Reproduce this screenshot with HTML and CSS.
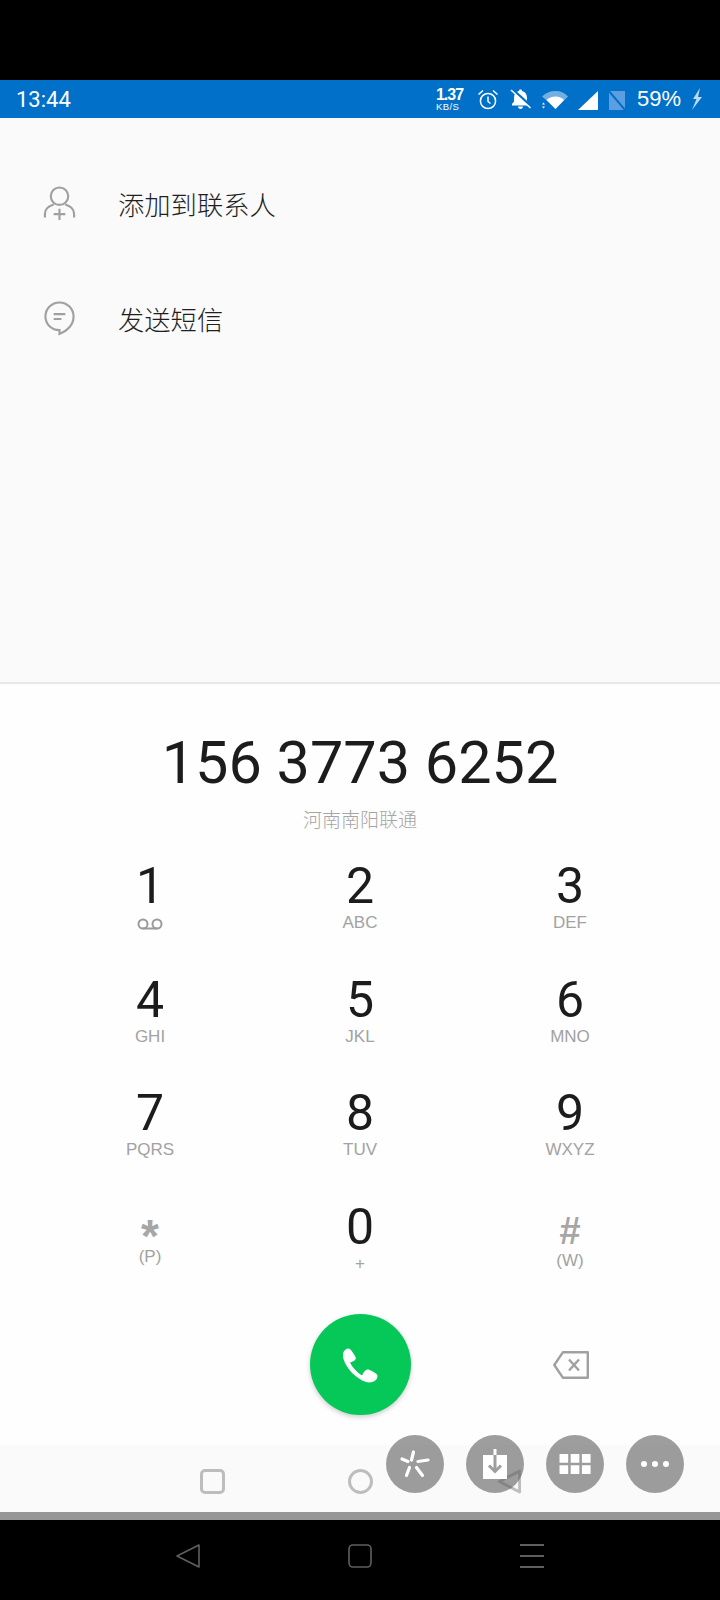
FILE: index.html
```html
<!DOCTYPE html>
<html lang="zh-CN">

<head>
    <meta charset="UTF-8">
    <meta name="viewport" content="width=device-width, initial-scale=1.0">
    <title>拨号</title>
    <link rel="stylesheet" href="styles.css">
</head>

<body>
    <div class="screen">
        <div class="top-black"></div>

        <!-- Status bar -->
        <header class="status-bar">
            <span class="clock">13:44</span>
            <div class="status-icons">
                <div class="net-speed">
                    <span class="net-value">1.37</span>
                    <span class="net-unit">KB/S</span>
                </div>
                <svg class="ic-alarm" viewBox="0 0 22 21" fill="none" stroke="#fff" stroke-width="1.5">
                    <circle cx="11" cy="12" r="7.6" />
                    <path d="M11 7.5V12.5L13.5 14.5" />
                    <path d="M1.5 5.5L6 1.5M20.5 5.5L16 1.5" />
                </svg>
                <svg class="ic-bell" viewBox="0 0 23 20">
                    <path d="M11.5 0.5c1 0 1.6.6 1.6 1.5C16.5 3 18 5.5 18 9V12.5L20 15V16.5H3V15L5 12.5V9C5 5.5 6.5 3 9.9 2 9.9 1.1 10.5 .5 11.5 .5z" fill="#fff" />
                    <path d="M9 17.5H14C14 18.9 12.9 20 11.5 20S9 18.9 9 17.5z" fill="#fff" />
                    <path d="M3 0L23 18" stroke="#0070c9" stroke-width="2.5" />
                    <path d="M2 1L21.5 19" stroke="#fff" stroke-width="1.5" />
                </svg>
                <svg class="ic-wifi" viewBox="0 0 26 21" fill="#fff">
                    <path d="M0 7.5C3.5 4 8 2 13.5 2S23 4 26 7.5L13.5 20 6.5 13z" opacity=".45" />
                    <path d="M4.5 11C7 8.8 10 7.5 13.5 7.5s6.5 1.3 8.5 3.5L13.5 20z" />
                    <path d="M0 15.5l1.5-2 1.5 2zM0 17.5h3l-1.5 2z" />
                </svg>
                <svg class="ic-signal" viewBox="0 0 20 21" fill="#fff">
                    <path d="M20 2V21H0z" />
                </svg>
                <svg class="ic-sim" viewBox="0 0 19 21">
                    <path d="M1 2H17V21H1z" fill="#5b9fe0" />
                    <path d="M0 1L17 21" stroke="#0070c9" stroke-width="2" />
                </svg>
                <span class="battery">59%</span>
                <svg class="ic-bolt" viewBox="0 0 11 22" fill="#fff">
                    <path d="M9 0L2 11H5.5L1 22 11 9H7z" opacity=".75" />
                </svg>
            </div>
        </header>

        <!-- Call actions -->
        <section class="action-list">
            <div class="action-row">
                <svg class="action-icon" viewBox="0 0 34 36" fill="none" stroke="#a0a0a0" stroke-width="2.2">
                    <circle cx="17" cy="11" r="9" />
                    <path d="M2 33V29C2 24.5 6 21 11 19.5M32 33V29C32 24.5 28 21 23 19.5" />
                    <path d="M17 24V35.5M11 29.5H23" />
                </svg>
                <span>添加到联系人</span>
            </div>
            <div class="action-row">
                <svg class="action-icon" viewBox="0 0 34 36" fill="none" stroke="#a0a0a0" stroke-width="2.2">
                    <path d="M17 2C9 2 2.5 8.5 2.5 16.5S9 30.5 17 30.5V34.5C25 31.5 31.5 25 31.5 16.5 31.5 8.5 25 2 17 2z" />
                    <path d="M11 14H23M11 19H19" />
                </svg>
                <span>发送短信</span>
            </div>
        </section>

        <!-- Dial pad -->
        <section class="dialer">
            <div class="dial-number">156 3773 6252</div>
            <div class="dial-carrier">河南南阳联通</div>

            <div class="keypad">
                <div class="key">
                    <span class="key-digit">1</span>
                    <svg class="ic-voicemail" viewBox="0 0 26 13" fill="none" stroke="#9a9a9a" stroke-width="2">
                        <circle cx="6" cy="6" r="4.5" />
                        <circle cx="20" cy="6" r="4.5" />
                        <path d="M6 10.5H20" />
                    </svg>
                </div>
                <div class="key"><span class="key-digit">2</span><span class="key-sub">ABC</span></div>
                <div class="key"><span class="key-digit">3</span><span class="key-sub">DEF</span></div>
                <div class="key"><span class="key-digit">4</span><span class="key-sub">GHI</span></div>
                <div class="key"><span class="key-digit">5</span><span class="key-sub">JKL</span></div>
                <div class="key"><span class="key-digit">6</span><span class="key-sub">MNO</span></div>
                <div class="key"><span class="key-digit">7</span><span class="key-sub">PQRS</span></div>
                <div class="key"><span class="key-digit">8</span><span class="key-sub">TUV</span></div>
                <div class="key"><span class="key-digit">9</span><span class="key-sub">WXYZ</span></div>
                <div class="key"><span class="key-star">*</span><span class="key-sub">(P)</span></div>
                <div class="key"><span class="key-digit">0</span><span class="key-sub">+</span></div>
                <div class="key"><span class="key-hash">#</span><span class="key-sub">(W)</span></div>
            </div>

            <div class="call-row">
                <div></div>
                <div class="call-button">
                    <svg viewBox="0 0 36 36" fill="#fff">
                        <path d="M1.5 5C3 2 6 .5 8 2 9.5 3.5 12 7 13.5 10 14.5 12 13 14 8 15.5 10.5 20.5 14.5 25 20 28.5 22 23.5 24.5 22 26.5 22.5 29.5 23.5 33 25.5 35 27.5 36 29 35.5 31 34 33 31 35.5 27 36 24 35 14 31.5 4.5 22 1.5 12 .8 9.5 .8 7 1.5 5Z" />
                    </svg>
                </div>
                <div class="backspace">
                    <svg viewBox="0 0 36 28" fill="none" stroke="#a0a0a0" stroke-width="2.4" stroke-linejoin="round">
                        <path d="M10 1.2H34.8V26.8H10L1.3 14z" />
                        <path d="M16 8.5L26 19.5M26 8.5L16 19.5" />
                    </svg>
                </div>
            </div>
        </section>

        <!-- In-app navigation strip -->
        <nav class="soft-nav">
            <span class="soft-square"></span>
            <span class="soft-circle"></span>
            <svg class="soft-back" viewBox="0 0 25 26" fill="none" stroke="#bdbdbd" stroke-width="3" stroke-linejoin="round">
                <path d="M23 2V24L2 13z" />
            </svg>
        </nav>
        <div class="grey-bar"></div>

        <!-- Device navigation -->
        <nav class="device-nav">
            <svg class="device-icon" viewBox="0 0 24 24" fill="none" stroke="#5f5f5f" stroke-width="1.6" stroke-linejoin="round">
                <path d="M23 1V23L1 12z" />
            </svg>
            <svg class="device-icon" viewBox="0 0 24 24" fill="none" stroke="#5f5f5f" stroke-width="1.6">
                <rect x="1" y="1" width="22" height="22" rx="4" />
            </svg>
            <svg class="device-icon" viewBox="0 0 24 24" fill="none" stroke="#5f5f5f" stroke-width="2">
                <path d="M0 1H24M0 12H24M0 23H24" />
            </svg>
        </nav>

        <!-- Floating shortcut buttons -->
        <div class="float-buttons">
            <div class="float-button">
                <svg viewBox="0 0 36 36" fill="none" stroke="#fff" stroke-width="3.2" stroke-linecap="round">
                    <path d="M14.5 14L16.5 6M5 13L11 15.5M21 15.5L31 14M12.5 21.5L9.5 29.5M19.5 21.5L25.5 29.5" />
                </svg>
            </div>
            <div class="float-button">
                <svg viewBox="0 0 36 36">
                    <path d="M6 9H30V33H6z" fill="#fff" />
                    <path d="M16.5 3H19.5V9H16.5z" fill="#fff" />
                    <path d="M18 9V25.5M12 19.5L18 25.5 24 19.5" fill="none" stroke="#9e9e9e" stroke-width="3" />
                </svg>
            </div>
            <div class="float-button">
                <svg viewBox="0 0 36 36" fill="#fff">
                    <path d="M2.5 8H11.2V16.7H2.5zM13.7 8H22.4V16.7H13.7zM24.9 8H33.6V16.7H24.9zM2.5 19.2H11.2V28H2.5zM13.7 19.2H22.4V28H13.7zM24.9 19.2H33.6V28H24.9z" />
                </svg>
            </div>
            <div class="float-button">
                <svg viewBox="0 0 36 36" fill="#fff">
                    <circle cx="7" cy="18" r="3" />
                    <circle cx="18" cy="18" r="3" />
                    <circle cx="29" cy="18" r="3" />
                </svg>
            </div>
        </div>
    </div>
</body>

</html>
```

FILE: styles.css
```css
body {
    margin: 0;
    padding: 0;
    background-color: #000;
    font-family: "Liberation Sans", Arial, sans-serif;
}

.screen {
    position: relative;
    width: 720px;
    height: 1600px;
    display: flex;
    flex-direction: column;
    overflow: hidden;
}

.top-black {
    height: 80px;
    background-color: #000;
}

/* Status bar */
.status-bar {
    height: 38px;
    background-color: #0070c9;
    color: #fff;
    display: flex;
    align-items: center;
    justify-content: space-between;
    padding: 0 18px 0 16px;
}

.clock {
    font-family: Roboto, sans-serif;
    font-size: 22px;
}

.status-icons {
    display: flex;
    align-items: center;
    gap: 10px;
}

.net-speed {
    width: 31px;
    display: flex;
    flex-direction: column;
    align-items: flex-start;
}

.net-value {
    font-weight: bold;
    font-size: 16px;
    line-height: 14px;
    letter-spacing: -1px;
}

.net-unit {
    font-size: 9.5px;
    line-height: 9px;
    letter-spacing: 0.4px;
}

.ic-alarm {
    width: 22px;
    height: 21px;
}

.ic-bell {
    width: 23px;
    height: 20px;
}

.ic-wifi {
    width: 26px;
    height: 21px;
}

.ic-signal {
    width: 20px;
    height: 21px;
}

.ic-sim {
    width: 19px;
    height: 21px;
}

.battery {
    font-size: 22px;
}

.ic-bolt {
    width: 11px;
    height: 22px;
}

/* Actions */
.action-list {
    height: 566px;
    box-sizing: border-box;
    background-color: #fafafa;
    border-bottom: 2px solid #e8e8e8;
    padding-top: 56px;
    display: flex;
    flex-direction: column;
    gap: 57px;
}

.action-row {
    height: 58px;
    display: flex;
    align-items: center;
    gap: 42px;
    padding-left: 43px;
    font-family: "Noto Sans CJK SC", sans-serif;
    font-size: 26.3px;
    font-weight: 300;
    color: #1f1f1f;
}

.action-icon {
    width: 33px;
    height: 36px;
}

/* Dialer */
.dialer {
    height: 761px;
    box-sizing: border-box;
    background-color: #fefefe;
    padding-top: 44px;
}

.dial-number {
    font-family: Roboto, sans-serif;
    font-size: 59.4px;
    line-height: 70px;
    color: #1c1c1c;
    text-align: center;
}

.dial-carrier {
    margin-top: 8px;
    font-family: "Noto Sans CJK SC", sans-serif;
    font-size: 19px;
    font-weight: 300;
    line-height: 26px;
    color: #a5a5a5;
    text-align: center;
}

.keypad {
    margin: 29px 45px 0;
    display: grid;
    grid-template-columns: repeat(3, 210px);
    grid-auto-rows: 113.5px;
}

.key {
    display: flex;
    flex-direction: column;
    align-items: center;
}

.key-digit {
    font-family: Roboto, sans-serif;
    font-size: 50px;
    line-height: 50px;
    color: #1c1c1c;
}

.key-sub {
    margin-top: 2px;
    font-size: 17px;
    line-height: 20px;
    color: #a2a2a2;
}

.key-star,
.key-hash {
    box-sizing: border-box;
    font-weight: bold;
    line-height: 50px;
    color: #a6a6a6;
}

.key-star {
    height: 43px;
    padding-top: 9px;
    font-size: 46px;
}

.key-hash {
    height: 47px;
    padding-top: 4px;
    font-size: 38px;
}

.ic-voicemail {
    width: 26px;
    height: 13px;
    margin-top: 7px;
}

.call-row {
    margin: -1px 45px 0;
    display: grid;
    grid-template-columns: repeat(3, 210px);
    align-items: center;
    justify-items: center;
}

.call-button {
    width: 101px;
    height: 101px;
    border-radius: 50%;
    background-color: #05c858;
    box-shadow: 0 2px 5px rgba(0, 0, 0, 0.2);
    display: flex;
    align-items: center;
    justify-content: center;
}

.call-button svg {
    width: 36px;
    height: 36px;
}

.backspace {
    margin-left: 2px;
}

.backspace svg {
    display: block;
    width: 36px;
    height: 28px;
}

/* Strip under the dialer */
.soft-nav {
    height: 67px;
    background-color: #fafafa;
    position: relative;
}

.soft-square,
.soft-circle,
.soft-back {
    position: absolute;
    top: 24px;
    box-sizing: border-box;
    width: 25px;
    height: 25px;
}

.soft-square {
    left: 200px;
    border: 3px solid #bdbdbd;
    border-radius: 5px;
}

.soft-circle {
    left: 348px;
    border: 3px solid #bdbdbd;
    border-radius: 50%;
}

.soft-back {
    left: 497px;
}

.grey-bar {
    height: 8px;
    background-color: #969696;
}

.device-nav {
    flex: 1;
    background-color: #000;
    display: flex;
    justify-content: center;
    gap: 148px;
    padding-top: 24px;
}

.device-icon {
    width: 24px;
    height: 24px;
}

/* Floating buttons */
.float-buttons {
    position: absolute;
    top: 1435px;
    right: 36px;
    display: flex;
    gap: 22px;
}

.float-button {
    width: 58px;
    height: 58px;
    border-radius: 50%;
    background-color: rgba(93, 93, 93, 0.6);
    display: flex;
    align-items: center;
    justify-content: center;
}

.float-button svg {
    width: 36px;
    height: 36px;
}
```
